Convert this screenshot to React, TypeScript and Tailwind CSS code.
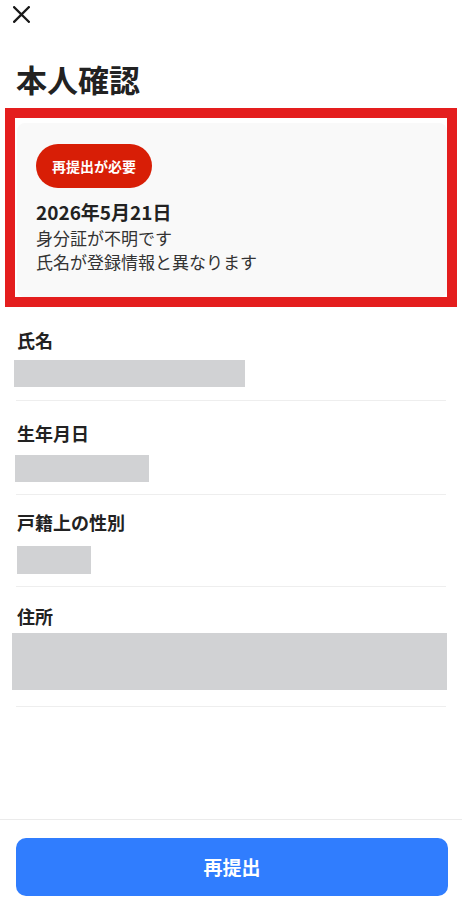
import React from "react";

const font = {
  fontFamily: '"Noto Sans CJK JP", "Noto Sans", sans-serif',
};

export default function App() {
  return (
    <div
      className="w-[462px] h-[905px] bg-white flex flex-col text-[#222] overflow-hidden"
      style={font}
    >
      <div className="flex-1 flex flex-col">
        {/* close icon */}
        <div className="h-[32px] pl-[13px] pt-[6px]">
          <svg width="17" height="17" viewBox="0 0 17 17">
            <path
              d="M1.2 1.2 L15.8 15.8 M15.8 1.2 L1.2 15.8"
              stroke="#1a1a1a"
              strokeWidth="2.3"
              strokeLinecap="square"
              fill="none"
            />
          </svg>
        </div>

        {/* title */}
        <h1 className="mt-[29px] ml-[16px] text-[31px] leading-[36px] font-bold">
          本人確認
        </h1>

        {/* highlighted card */}
        <div className="mt-[11px] mx-[5px] h-[199px] border-[10px] border-[#e41e1e] pt-[5px] pl-[2px]">
          <div className="h-full bg-[#f9f9f9] rounded-[8px] pl-[19px] pt-[21px]">
            <div className="inline-flex items-center justify-center h-[44px] px-[16px] rounded-full bg-[#d81e06] text-white text-[14px] font-bold">
              再提出が必要
            </div>
            <div className="mt-[12px] text-[19px] leading-[24px] font-bold text-[#222]">
              2026年5月21日
            </div>
            <div className="mt-[2px] text-[17px] leading-[24px] text-[#333]">
              <div>身分証が不明です</div>
              <div>氏名が登録情報と異なります</div>
            </div>
          </div>
        </div>

        {/* fields */}
        <div className="px-[16px]">
          {/* 氏名 */}
          <div className="mt-[21px] pl-[1px] text-[18px] leading-[24px] font-bold">
            氏名
          </div>
          <div className="mt-[8px] -ml-[2px] w-[231px] h-[27px] bg-[#d1d2d4]" />
          <div className="mt-[13px] h-px bg-[#eeeeee]" />

          {/* 生年月日 */}
          <div className="mt-[20px] pl-[1px] text-[18px] leading-[24px] font-bold">
            生年月日
          </div>
          <div className="mt-[10px] -ml-[1px] w-[134px] h-[27px] bg-[#d1d2d4]" />
          <div className="mt-[12px] h-px bg-[#eeeeee]" />

          {/* 戸籍上の性別 */}
          <div className="mt-[15px] pl-[1px] text-[18px] leading-[24px] font-bold">
            戸籍上の性別
          </div>
          <div className="mt-[12px] ml-[1px] w-[74px] h-[28px] bg-[#d1d2d4]" />
          <div className="mt-[12px] h-px bg-[#eeeeee]" />

          {/* 住所 */}
          <div className="mt-[17px] pl-[1px] text-[18px] leading-[24px] font-bold">
            住所
          </div>
          <div className="mt-[5px] -ml-[4px] w-[435px] h-[57px] bg-[#d1d2d4]" />
          <div className="mt-[16px] h-px bg-[#eeeeee]" />
        </div>
      </div>

      {/* footer */}
      <div className="border-t border-[#ebebeb] pl-[16px] pr-[14px] pt-[18px] pb-[9px]">
        <button className="w-full h-[58px] rounded-[10px] bg-[#307dfe] text-white text-[19px] font-bold">
          再提出
        </button>
      </div>
    </div>
  );
}
